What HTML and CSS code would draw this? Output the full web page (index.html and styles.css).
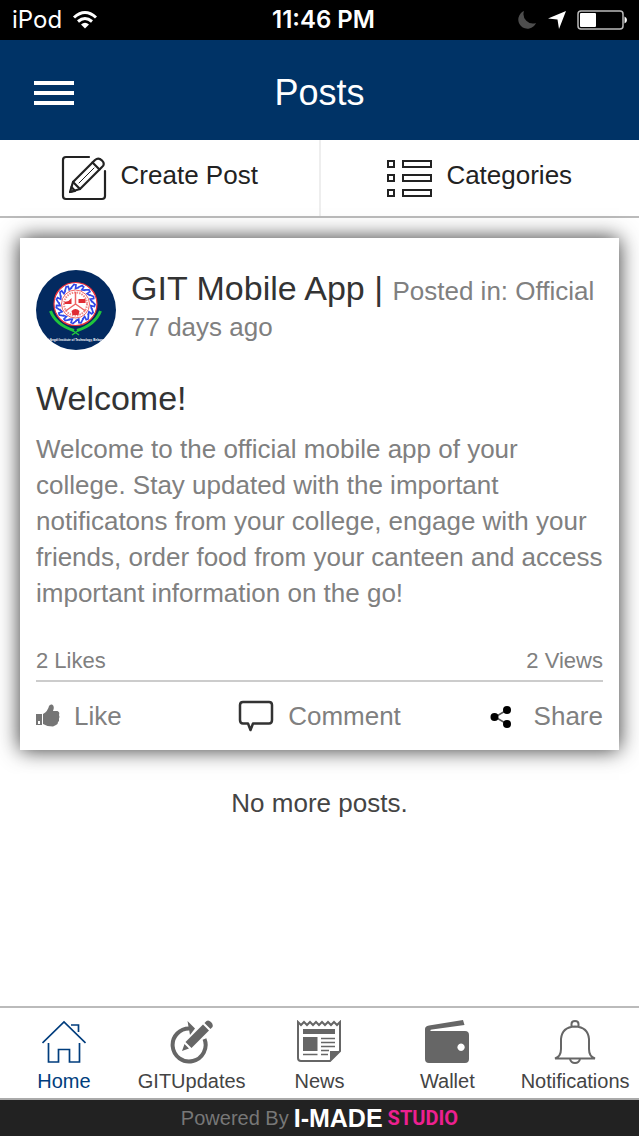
FILE: index.html
```html
<!DOCTYPE html>
<html lang="en">
<head>
  <meta charset="UTF-8" />
  <meta name="viewport" content="width=device-width, initial-scale=1.0"/>
  <title>Posts</title>
  <link rel="stylesheet" href="styles.css">
</head>
<body>

  <!-- Status bar -->
  <div class="status-bar">
    <div class="status-left">
      <span>iPod</span>
      <svg width="26" height="20" viewBox="0 0 26 20" fill="none" stroke="#fff" stroke-width="3">
        <path d="M2 7.500Q13-2.500 24 7.500"/>
        <path d="M6 11.500Q13 5.500 20 11.500"/>
        <path d="M9 14.500Q13 11 17 14.500L13 18.500z" fill="#fff" stroke="none"/>
      </svg>
    </div>
    <span class="status-time">11:46 PM</span>
    <div class="status-right">
      <svg width="20" height="20" viewBox="0 0 20 20">
        <path d="M7 1A9.200 9.200 0 1 0 19 13A9.500 9.500 0 0 1 7 1z" fill="#4d4d4d"/>
      </svg>
      <svg width="20" height="20" viewBox="0 0 20 20">
        <path d="M19 1L12 19L10.500 9.500L1 8.500z" fill="#fff"/>
      </svg>
      <svg width="50" height="20" viewBox="0 0 50 20">
        <rect x="1" y="1" width="45" height="18" rx="3" fill="none" stroke="#bbb" stroke-width="1.500"/>
        <rect x="3" y="3" width="16" height="14" rx="1" fill="#fff"/>
        <path d="M47.500 6.500Q50 7.500 50 10T47.500 13.500z" fill="#fff"/>
      </svg>
    </div>
  </div>

  <header class="header">
    <button class="menu-button" type="button" aria-label="Menu">
      <svg width="40" height="25" viewBox="0 0 40 25" fill="#fff">
        <path d="M0 0h40v4H0zM0 10h40v4H0zM0 20h40v4H0z"/>
      </svg>
    </button>
    <h1>Posts</h1>
  </header>

  <div class="actions">
    <button class="action" type="button">
      <svg width="46" height="46" viewBox="0 0 46 46" fill="none" stroke="#222" stroke-width="2.200" stroke-linejoin="round" stroke-linecap="round">
        <path d="M28 2H5Q2 2 2 5V41Q2 44 5 44H41Q44 44 44 41V16"/>
        <path d="M9 37L12 27L34 5Q37.500 2 41 5.500T41 12L19 34z"/>
        <path d="M12 27L19 34M31.500 7.500L38.500 14.500M9 37L14 36L10.500 32"/>
        <path d="M18 28L33 13" stroke-width="1"/>
      </svg>
      <span>Create Post</span>
    </button>
    <button class="action" type="button">
      <svg width="45" height="38" viewBox="0 0 45 38" fill="none" stroke="#222" stroke-width="2">
        <path d="M1 2h6v6H1zM16 2h28v6H16zM1 16h6v6H1zM16 16h28v6H16zM1 31h6v6H1zM16 31h28v6H16z"/>
      </svg>
      <span>Categories</span>
    </button>
  </div>

  <main class="feed">
    <article class="card">
      <div class="card-header">
        <svg class="avatar" width="80" height="80" viewBox="0 0 80 80">
          <defs>
            <clipPath id="disc"><circle cx="40" cy="40" r="40"/></clipPath>
            <path id="tooth" d="M-4.500 -16L-1.500 -19.500L.500 -19L0 -15.500L3.500 -16.500"/>
          </defs>
          <g clip-path="url(#disc)">
            <rect width="80" height="80" fill="#032a60"/>
            <g transform="translate(39.500 34)">
              <circle r="21.500" fill="#fff" stroke="#f0303c" stroke-width="1.200"/>
              <g fill="none" stroke="#3048e8" stroke-width="1.700">
                <use href="#tooth"/>
                <use href="#tooth" transform="rotate(24)"/>
                <use href="#tooth" transform="rotate(48)"/>
                <use href="#tooth" transform="rotate(72)"/>
                <use href="#tooth" transform="rotate(96)"/>
                <use href="#tooth" transform="rotate(120)"/>
                <use href="#tooth" transform="rotate(144)"/>
                <use href="#tooth" transform="rotate(168)"/>
                <use href="#tooth" transform="rotate(192)"/>
                <use href="#tooth" transform="rotate(216)"/>
                <use href="#tooth" transform="rotate(240)"/>
                <use href="#tooth" transform="rotate(264)"/>
                <use href="#tooth" transform="rotate(288)"/>
                <use href="#tooth" transform="rotate(312)"/>
                <use href="#tooth" transform="rotate(336)"/>
              </g>
              <circle r="14" fill="#fff" stroke="#e66" stroke-width="1"/>
              <circle r="11.500" fill="none" stroke="#e88" stroke-width="2" stroke-dasharray="1.500 1"/>
              <path d="M0 0V-12M0 0L-10 7M0 0L10 7" stroke="#e66" stroke-width="1.500"/>
              <path d="M-11-2l4-1 3-3v6h-7zM3-5h7v4H3zM-4 7q4-4 8 0l-1 4h-6z" fill="#e02c34"/>
            </g>
            <path d="M14.500 41Q20 55 38 60.500M64.500 41Q59 55 41 60.500" fill="none" stroke="#20c63c" stroke-width="3"/>
            <path d="M36 65l7-5M43 65l-7-5" stroke="#20c63c" stroke-width="1.500"/>
            <text x="40" y="71" class="avatar-text">di Angdi Institute of Technology, Belagavi</text>
          </g>
        </svg>
        <div>
          <div class="author">GIT Mobile App | <span class="meta">Posted in: Official</span></div>
          <div class="meta">77 days ago</div>
        </div>
      </div>
      <h2>Welcome!</h2>
      <p class="card-text">Welcome to the official mobile app of your college. Stay updated with the important notificatons from your college, engage with your friends, order food from your canteen and access important information on the go!</p>
      <div class="counts">
        <span>2 Likes</span>
        <span>2 Views</span>
      </div>
      <div class="card-buttons">
        <button type="button">
          <svg width="24" height="24" viewBox="0 0 24 24" fill="#757575">
            <path fill-rule="evenodd" d="M0 10h6v11H0zM2 17v3h2v-3z"/>
            <path d="M7 10Q12 7 13 2Q14 0 16 .500Q19 2 17 7H21.500Q24 8 23 11Q24 13 23 14.500Q23.500 17 22 18Q22 20.500 20 21L17 22.500Q11 22.500 7 20z"/>
          </svg>
          <span>Like</span>
        </button>
        <button type="button">
          <svg width="36" height="32" viewBox="0 0 36 32" fill="none" stroke="#333" stroke-width="2.500" stroke-linejoin="round">
            <path d="M5 2H31Q34 2 34 5V20Q34 23.500 31 23.500H15L12.500 30L10 23.500H5Q2 23.500 2 20V5Q2 2 5 2z"/>
          </svg>
          <span>Comment</span>
        </button>
        <button type="button" class="share">
          <svg width="22" height="24" viewBox="0 0 22 24">
            <path d="M17 6L5 13L17 20" fill="none" stroke="#555" stroke-width="1.500"/>
            <circle cx="17" cy="6" r="4"/><circle cx="4.500" cy="13" r="4"/><circle cx="17" cy="20" r="4"/>
          </svg>
          <span>Share</span>
        </button>
      </div>
    </article>
    <p class="no-more">No more posts.</p>
  </main>

  <nav class="tabs">
    <a href="#" class="tab active">
      <svg width="44" height="44" viewBox="0 0 44 44" fill="none" stroke="currentColor" stroke-width="1.700">
        <path d="M.500 23L22 2L43.500 23M29 5H36.500V12M6.500 23V42H16.500V29.500H27.500V42H37.500V23"/>
      </svg>
      <span>Home</span>
    </a>
    <a href="#" class="tab">
      <svg width="44" height="44" viewBox="0 0 44 44" fill="none" stroke="#666" stroke-width="4">
        <path d="M20 8.500A16.500 16.500 0 1 0 34.500 19"/>
        <path d="M17.500 1L25 8.500L20 15z" fill="#666" stroke="none"/>
        <path d="M12 31L14.500 24L19 28.500zM15.500 22L33 4.500L39 10.500L21.500 28zM34.500 3L36.500 1Q38.500-.500 41 2T42.500 7L40.500 9z" fill="#666" stroke="none"/>
      </svg>
      <span>GITUpdates</span>
    </a>
    <a href="#" class="tab">
      <svg width="44" height="44" viewBox="0 0 44 44" fill="none" stroke="#666" stroke-width="2">
        <path d="M1 2V38Q1 41 4 41H33L43 31V2L40 5L37 2L34 5L31 2L28 5L25 2L22 5L19 2L16 5L13 2L10 5L7 2L4 5z"/>
        <path d="M6 9H38V14H6zM6 17H20.500V31H6zM33 41V31H43z" fill="#666" stroke="none"/>
        <path d="M24 18.500H38M24 22.500H38M24 26.500H38M24 30.500H32M24 34.500H31M6 34.500H20.500" stroke-width="1.700"/>
      </svg>
      <span>News</span>
    </a>
    <a href="#" class="tab">
      <svg width="44" height="44" viewBox="0 0 44 44" fill="#666">
        <path fill-rule="evenodd" d="M0 9Q0 6 4 5.500L38 0L39.500 5L7 9.500Q4 10 6 11H40Q44 11 44 15V39Q44 43 40 43H4Q0 43 0 39zM36 23.500a3.700 3.700 0 1 0 .1 0z"/>
      </svg>
      <span>Wallet</span>
    </a>
    <a href="#" class="tab">
      <svg width="44" height="44" viewBox="0 0 44 44" fill="none" stroke="#666" stroke-width="2">
        <path d="M18.500 6.500V4Q18.500 1 22 1T25.500 4V6.500M2 38.500Q8 36.500 8 29V19Q9 7 22 6.500Q35 7 36 19V29Q36 36.500 42 38.500z"/>
        <path d="M17 39Q18 43 22 43T27 39"/>
      </svg>
      <span>Notifications</span>
    </a>
  </nav>

  <footer class="footer">
    <span>Powered By</span>
    <span class="brand">I-MADE</span>
    <span class="brand brand-studio">STUDIO</span>
  </footer>

</body>
</html>
```
FILE: styles.css
```css
* {
  margin: 0;
  padding: 0;
  box-sizing: border-box;
}
body {
  display: flex;
  flex-direction: column;
  min-height: 100vh;
  background-color: #fff;
  color: #333;
  font-family: "Liberation Sans", Arial, sans-serif;
  font-size: 26px;
  line-height: 36px;
}
button {
  background: none;
  border: none;
  color: inherit;
  font: inherit;
  cursor: pointer;
}
svg {
  display: block;
  flex-shrink: 0;
}

/* Status bar */
.status-bar {
  display: grid;
  grid-template-columns: 1fr auto 1fr;
  align-items: center;
  height: 40px;
  padding: 0 12px;
  background-color: #000;
  color: #fff;
  font-family: Inter, sans-serif;
  font-size: 24px;
}
.status-left, .status-right {
  display: flex;
  align-items: center;
  gap: 12px;
}
.status-left {
  gap: 10px;
}
.status-right {
  justify-content: flex-end;
  gap: 10px;
}
.status-time {
  padding-left: 8px;
  font-weight: 600;
}

/* Header */
.header {
  display: grid;
  grid-template-columns: 1fr auto 1fr;
  align-items: center;
  height: 100px;
  padding: 6px 34px 0;
  background-color: #003366;
  color: #fff;
}
.menu-button {
  justify-self: start;
}
.header h1 {
  font-size: 36px;
  font-weight: normal;
}

/* Create / categories */
.actions {
  display: flex;
  height: 78px;
  border-bottom: 2px solid #bbb;
}
.action {
  flex: 1;
  display: flex;
  justify-content: center;
  align-items: center;
  gap: 14px;
  color: #222;
}
.action span {
  padding-bottom: 6px;
}
.action:first-child {
  border-right: 2px solid #eee;
}

/* Feed */
.feed {
  flex: 1;
  padding: 20px;
}
.card {
  padding: 32px 16px 16px;
  background-color: #fff;
  box-shadow: 0 0 20px rgba(0,0,0,0.8);
}
.card-header {
  display: flex;
  gap: 15px;
  margin-bottom: 30px;
}
.avatar-text {
  fill: #fff;
  font-size: 3px;
  font-weight: bold;
  text-anchor: middle;
}
.author, .card h2 {
  font-size: 34px;
  font-weight: normal;
  line-height: 36px;
}
.meta, .card-text, .counts, .card-buttons {
  color: #808080;
}
.meta {
  font-size: 26px;
}
.card-text {
  margin: 15px 0 37px;
}
.counts {
  display: flex;
  justify-content: space-between;
  padding-bottom: 6px;
  border-bottom: 2px solid #ccc;
  font-size: 22px;
  line-height: 26px;
}
.card-buttons {
  display: grid;
  grid-template-columns: 1fr auto 1fr;
  padding-top: 16px;
}
.card-buttons button {
  display: flex;
  align-items: center;
  gap: 14px;
}
.card-buttons .share {
  justify-self: end;
  gap: 22px;
}
.no-more {
  padding-top: 35px;
  color: #444;
  text-align: center;
}

/* Bottom tabs */
.tabs {
  display: grid;
  grid-template-columns: repeat(5, 1fr);
  border-top: 2px solid #bbb;
  border-bottom: 2px solid #aaa;
}
.tab {
  display: flex;
  flex-direction: column;
  align-items: center;
  gap: 4px;
  padding: 12px 0 4px;
  color: #444;
  font-size: 20px;
  line-height: 26px;
  text-decoration: none;
}
.tab.active {
  color: #003d7d;
}

/* Footer */
.footer {
  display: flex;
  justify-content: center;
  align-items: center;
  gap: 5px;
  height: 36px;
  background-color: #222;
  color: #777;
  font-size: 20px;
}
.brand {
  color: #fff;
  font-size: 25px;
  font-weight: bold;
}
.brand-studio {
  color: #ec2090;
  font-family: Roboto, sans-serif;
  font-size: 20px;
}
```
